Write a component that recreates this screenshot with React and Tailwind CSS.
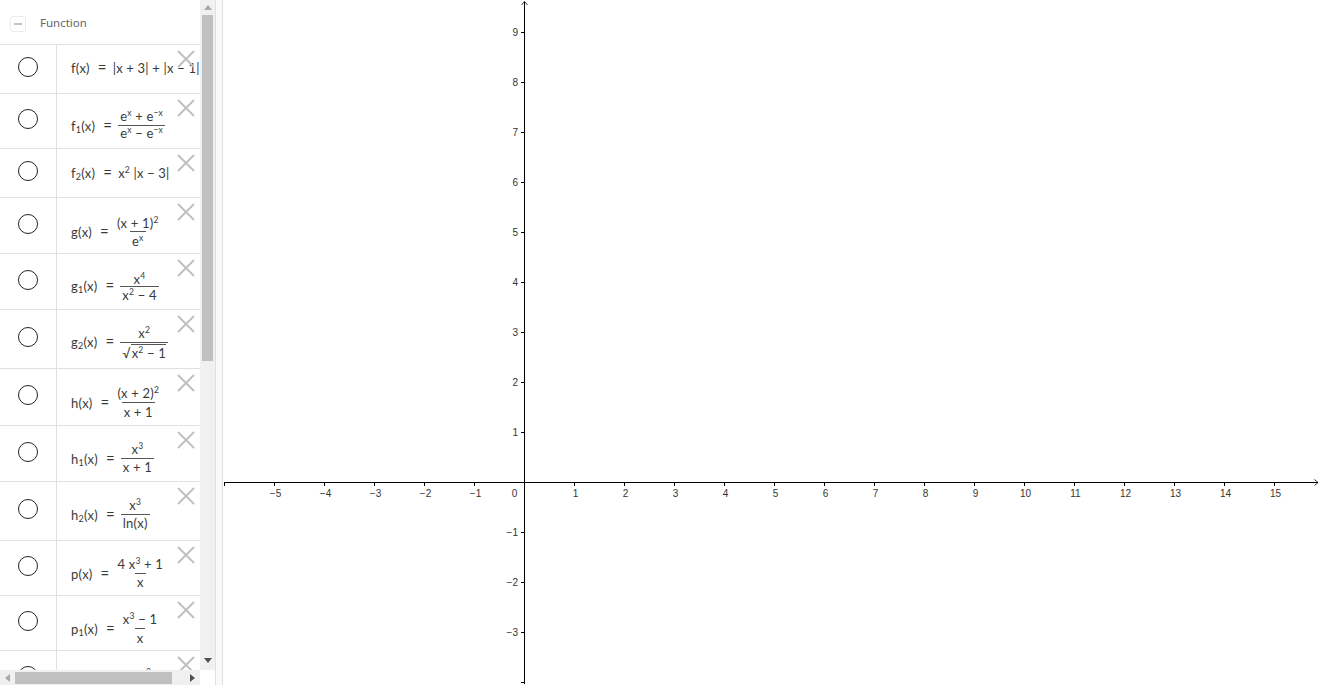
import React from "react";

const Sup = ({ children }) => <span className="relative -top-[5px] text-[8.5px] leading-none">{children}</span>;
const Sub = ({ children }) => <span className="relative top-[2px] text-[9px] leading-none">{children}</span>;
const Sp = () => <span className="inline-block w-[3.5px]" />;
const Frac = ({ n, d, nc = "", dc = "" }) => (
  <span className="inline-flex flex-col items-center ml-[6px]">
    <span className="px-[2px] h-[18px] flex items-end leading-[16px] whitespace-nowrap"><span className={`relative ${nc}`}>{n}</span></span>
    <span className="px-[2px] h-[18px] flex items-start border-t border-[#555555] leading-[16px] whitespace-nowrap"><span className={`relative ${dc}`}>{d}</span></span>
  </span>
);
const Name = ({ a, s, t = "top-[2px]" }) => (
  <span className={`relative whitespace-nowrap ${t}`}>{a}{s ? <Sub>{s}</Sub> : null}(x)<span className="ml-[8px] text-[15px] leading-none">=</span></span>
);
const X2 = ({ p }) => <span>x<Sup>{p}</Sup></span>;

const rows = [
  { h: "h-[49px]", c: "pt-[12px]", f: "pt-[12px]",
    m: <><Name a="f" /><span className="relative top-[2px] ml-[6px]">|x<Sp />+<Sp />3|<Sp />+<Sp />|x<Sp />−<Sp />1|</span></> },
  { h: "h-[55px]", c: "pt-[15px]", f: "pt-[13px]",
    m: <><Name a="f" s="1" /><Frac nc="-top-[1px]" dc="-top-[1px]" n={<span>e<Sup>x</Sup><Sp />+<Sp />e<Sup>−x</Sup></span>} d={<span>e<Sup>x</Sup><Sp />−<Sp />e<Sup>−x</Sup></span>} /></> },
  { h: "h-[49px]", c: "pt-[12px]", f: "pt-[13px]",
    m: <><Name a="f" s="2" /><span className="relative top-[2px] ml-[6px]"><X2 p="2" /><Sp />|x<Sp />−<Sp />3|</span></> },
  { h: "h-[56px]", c: "pt-[16px]", f: "pt-[15px]",
    m: <><Name a="g" /><Frac dc="top-[1px]" n={<span>(x<Sp />+<Sp />1)<Sup>2</Sup></span>} d={<span>e<Sup>x</Sup></span>} /></> },
  { h: "h-[56px]", c: "pt-[16px]", f: "pt-[14px]",
    m: <><Name a="g" s="1" t="top-[1px]" /><Frac nc="top-[1px]" n={<X2 p="4" />} d={<span><X2 p="2" /><Sp />−<Sp />4</span>} /></> },
  { h: "h-[59px]", c: "pt-[17px]", f: "pt-[14px]",
    m: <><Name a="g" s="2" t="top-[1px]" /><Frac nc="-top-[1px]" dc="top-[2px]" n={<X2 p="2" />} d={<span className="whitespace-nowrap">√<span className="border-t border-[#555555] pl-[1px]"><X2 p="2" /><Sp />−<Sp />1</span></span>} /></> },
  { h: "h-[57px]", c: "pt-[16px]", f: "pt-[15px]",
    m: <><Name a="h" /><Frac nc="-top-[1px]" dc="top-[1px]" n={<span>(x<Sp />+<Sp />2)<Sup>2</Sup></span>} d={<span>x<Sp />+<Sp />1</span>} /></> },
  { h: "h-[56px]", c: "pt-[16px]", f: "pt-[14px]",
    m: <><Name a="h" s="1" /><Frac nc="-top-[1px]" n={<X2 p="3" />} d={<span>x<Sp />+<Sp />1</span>} /></> },
  { h: "h-[59px]", c: "pt-[17px]", f: "pt-[14px]",
    m: <><Name a="h" s="2" /><Frac nc="-top-[1px]" n={<X2 p="3" />} d={<span>ln(x)</span>} /></> },
  { h: "h-[55px]", c: "pt-[15px]", f: "pt-[14px]",
    m: <><Name a="p" /><Frac nc="-top-[1px]" n={<span>4<Sp /><X2 p="3" /><Sp />+<Sp />1</span>} d={<span>x</span>} /></> },
  { h: "h-[55px]", c: "pt-[15px]", f: "pt-[14px]",
    m: <><Name a="p" s="1" /><Frac nc="-top-[1px]" dc="top-[1px]" n={<span><X2 p="3" /><Sp />−<Sp />1</span>} d={<span>x</span>} /></> },
  { h: "h-[55px]", c: "pt-[15px]", f: "pt-[14px]",
    m: <><Name a="p" s="2" /><Frac n={<X2 p="3" />} d={<span>x<Sup>2</Sup><Sp />+<Sp />4<Sp />x</span>} /></> },
];

const Cross = () => (
  <svg width="18" height="18" viewBox="0 0 18 18" className="block">
    <path d="M1 1 L17 17 M17 1 L1 17" stroke="#c0c0c0" strokeWidth="2" fill="none" />
  </svg>
);

const Row = ({ r }) => (
  <div className={`relative flex shrink-0 border-b border-[#e0e0e0] ${r.h}`}>
    <div className={`w-[57px] shrink-0 border-r border-[#e0e0e0] pl-[18px] ${r.c}`}>
      <div className="w-[20px] h-[20px] rounded-full border-[1.5px] border-[#222222]" />
    </div>
    <div className={`flex-1 min-w-0 overflow-hidden pl-[14px] text-[13px] tracking-[0.2px] text-[#3a3a3a] whitespace-nowrap font-['Lato',sans-serif] ${r.f}`}>
      <span className="inline-flex items-center">{r.m}</span>
    </div>
    <div className="absolute left-[177px] top-[5px]"><Cross /></div>
  </div>
);

const Tri = ({ d, color }) => {
  const p = { u: "M4 1 L8 6 L0 6 Z", d: "M0 1 L8 1 L4 6 Z", l: "M6 0 L6 8 L1 4 Z", r: "M1 0 L1 8 L6 4 Z" }[d];
  return <svg width="8" height="8" viewBox="0 0 8 8" className="block"><path d={p} fill={color} /></svg>;
};

const xs = [];
for (let i = -5; i <= 15; i++) if (i !== 0) xs.push(i);
const ys = [-3, -2, -1, 1, 2, 3, 4, 5, 6, 7, 8, 9];
const fmt = (n) => (n < 0 ? "−" + -n : "" + n);

const Graph = () => (
  <svg width="1097" height="685" viewBox="223 0 1097 685" className="block">
    <g stroke="#000000" strokeWidth="1" fill="none">
      <path d="M224 482.5 H1318" />
      <path d="M1314.5 479.5 L1318 482.5 L1314.5 485.5" strokeWidth="0.8" />
      <path d="M524.5 684 V1.5" />
      <path d="M521.5 5 L524.5 1.5 L527.5 5" strokeWidth="0.8" />
      <path d="M224.5 482 V486" />
      <path d="M521 682.5 H525" />
      {xs.map((i) => <path key={i} d={`M${524.5 + i * 50} 482 V486`} />)}
      {ys.map((i) => <path key={i} d={`M521 ${482.5 - i * 50} H525`} />)}
    </g>
    <g fill="#333333" fontSize="10" fontFamily="'Liberation Sans',sans-serif">
      {xs.map((i) => (
        <text key={i} x={525.5 + i * 50} y={496.5} textAnchor="middle">{fmt(i)}</text>
      ))}
      <text x="514.5" y="496.5" textAnchor="middle">0</text>
      {ys.map((i) => (
        <text key={i} x={518} y={485.5 - i * 50} textAnchor="end">{fmt(i)}</text>
      ))}
    </g>
  </svg>
);

export default function App() {
  return (
    <div className="flex w-[1320px] h-[687px] bg-white overflow-hidden font-['Lato',sans-serif]">
      <div className="flex flex-col w-[215px] h-[685px] shrink-0">
        <div className="flex h-[670px]">
          <div className="w-[200px] h-[670px] overflow-hidden flex flex-col">
            <div className="h-[45px] shrink-0 border-b border-[#e0e0e0] flex items-center pl-[10px] pt-[4px]">
              <div className="w-[16px] h-[16px] rounded-[3px] border border-[#ebebeb] flex items-center justify-center">
                <div className="w-[8px] h-[1.5px] bg-[#c4c4c4]" />
              </div>
              <span className="relative -top-[1px] ml-[14px] text-[11.5px] text-[#666666] font-['Noto_Sans',sans-serif]">Function</span>
            </div>
            {rows.map((r, i) => <Row key={i} r={r} />)}
          </div>
          <div className="w-[15px] h-[670px] bg-[#f0f0f0] flex flex-col">
            <div className="h-[15px] flex items-center justify-center"><Tri d="u" color="#a8a8a8" /></div>
            <div className="w-[11px] h-[346px] ml-[2px] bg-[#c0c0c0]" />
            <div className="flex-1" />
            <div className="h-[18px] flex items-center justify-center"><Tri d="d" color="#505050" /></div>
          </div>
        </div>
        <div className="flex h-[15px]">
          <div className="w-[200px] bg-[#f0f0f0] flex items-center">
            <div className="w-[15px] flex justify-center"><Tri d="l" color="#a8a8a8" /></div>
            <div className="w-[157px] h-[12px] bg-[#c0c0c0]" />
            <div className="flex-1 flex justify-end pr-[3px]"><Tri d="r" color="#505050" /></div>
          </div>
        </div>
      </div>
      <div className="w-[8px] h-[685px] shrink-0 bg-[#f9f9f9] border-x border-[#e0e0e0]" />
      <div className="flex-1 h-[685px] overflow-hidden"><Graph /></div>
    </div>
  );
}
